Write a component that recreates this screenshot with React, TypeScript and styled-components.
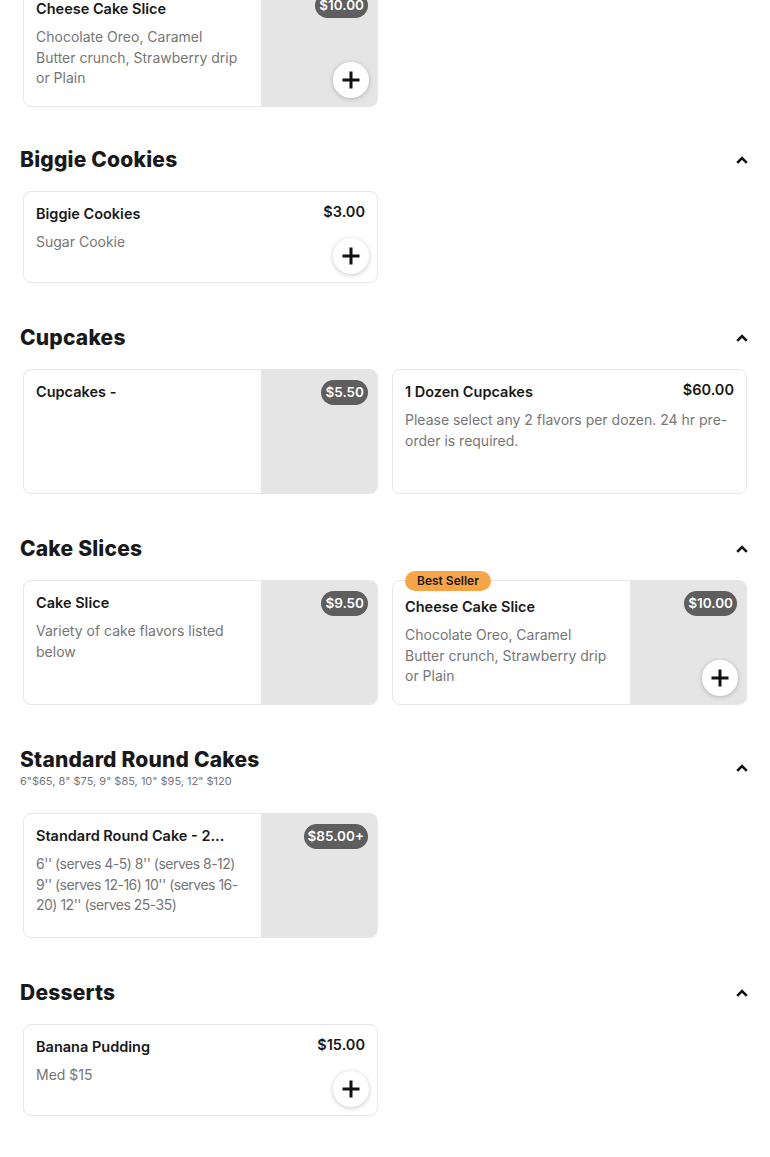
import styled, { createGlobalStyle } from "styled-components";

type Item = {
  name: string;
  price: string;
  desc?: string;
  image?: boolean;
  add?: boolean;
  badge?: string;
  tight?: boolean;
};

type Section = {
  title?: string;
  subtitle?: string;
  items: Item[];
};

const cheeseCake: Item = {
  name: "Cheese Cake Slice",
  price: "$10.00",
  desc: "Chocolate Oreo, Caramel Butter crunch, Strawberry drip or Plain",
  image: true,
  add: true,
  badge: "Best Seller",
};

const sections: Section[] = [
  { items: [cheeseCake] },
  {
    title: "Biggie Cookies",
    items: [{ name: "Biggie Cookies", price: "$3.00", desc: "Sugar Cookie", add: true }],
  },
  {
    title: "Cupcakes",
    items: [
      { name: "Cupcakes -", price: "$5.50", image: true },
      {
        name: "1 Dozen Cupcakes",
        price: "$60.00",
        desc: "Please select any 2 flavors per dozen. 24 hr pre-order is required.",
      },
    ],
  },
  {
    title: "Cake Slices",
    items: [
      { name: "Cake Slice", price: "$9.50", desc: "Variety of cake flavors listed below", image: true },
      cheeseCake,
    ],
  },
  {
    title: "Standard Round Cakes",
    subtitle: "6\"$65, 8\" $75, 9\" $85, 10\" $95, 12\" $120",
    items: [
      {
        name: "Standard Round Cake - 2...",
        price: "$85.00+",
        desc: "6'' (serves 4-5) 8'' (serves 8-12) 9'' (serves 12-16) 10'' (serves 16-20) 12'' (serves 25-35)",
        image: true,
        tight: true,
      },
    ],
  },
  {
    title: "Desserts",
    items: [{ name: "Banana Pudding", price: "$15.00", desc: "Med $15", add: true }],
  },
];

const PlusIcon = () => (
  <svg width="20" height="20" viewBox="0 0 20 20">
    <path d="M10 1.5v17M1.5 10h17" stroke="#111" strokeWidth="3" />
  </svg>
);

const ChevronUp = () => (
  <svg width="12" height="8" viewBox="0 0 12 8">
    <path d="M1.2 6.8L6 2l4.8 4.8" fill="none" stroke="#111" strokeWidth="2.6" />
  </svg>
);

const ItemCard = ({ item }: { item: Item }) => (
  <Card>
    {item.badge && <Badge>{item.badge}</Badge>}
    <Info $badge={!!item.badge}>
      <NameRow>
        <Name>{item.name}</Name>
        {!item.image && <Price>{item.price}</Price>}
      </NameRow>
      {item.desc && (
        <Desc $wide={!item.image} $tight={item.tight}>
          {item.desc}
        </Desc>
      )}
    </Info>
    {item.image && (
      <Photo>
        <PricePill>{item.price}</PricePill>
      </Photo>
    )}
    {item.add && (
      <AddButton aria-label="Add">
        <PlusIcon />
      </AddButton>
    )}
  </Card>
);

export default function App() {
  return (
    <>
      <GlobalStyle />
      <Page>
        {sections.map((s, i) => (
          <Block key={i} $first={i === 0}>
            {s.title && (
              <Header $sub={!!s.subtitle}>
                <div>
                  <Title>{s.title}</Title>
                  {s.subtitle && <Subtitle>{s.subtitle}</Subtitle>}
                </div>
                <Toggle>
                  <ChevronUp />
                </Toggle>
              </Header>
            )}
            <Grid>
              {s.items.map((it, j) => (
                <ItemCard key={j} item={it} />
              ))}
            </Grid>
          </Block>
        ))}
      </Page>
    </>
  );
}

const GlobalStyle = createGlobalStyle`
  body {
    margin: 0;
    background: #ffffff;
    font-family: Inter, "Noto Sans", sans-serif;
    color: #191919;
    overflow: hidden;
  }
`;

const Page = styled.div`
  display: flex;
  flex-direction: column;
  gap: 41px;
  padding: 0 20px 40px;
`;

const Block = styled.section<{ $first?: boolean }>`
  margin: ${(p) => (p.$first ? "-18px 0 -2px" : "0")};
`;

const Header = styled.div<{ $sub?: boolean }>`
  display: flex;
  justify-content: space-between;
  align-items: center;
  margin-bottom: ${(p) => (p.$sub ? "24px" : "18px")};
`;

const Title = styled.h2`
  margin: 0;
  font-size: 21px;
  line-height: 27px;
  font-weight: 800;
  letter-spacing: 0.2px;
`;

const Subtitle = styled.div`
  font-size: 11px;
  line-height: 16px;
  color: #767676;
`;

const Toggle = styled.div`
  display: flex;
  align-items: center;
  justify-content: center;
  width: 16px;
  height: 16px;
`;

const Grid = styled.div`
  display: grid;
  grid-template-columns: 1fr 1fr;
  gap: 14px;
  padding: 0 3px;
`;

const Card = styled.div`
  position: relative;
  display: flex;
  min-height: 90px;
  border: 1px solid #e6e6eb;
  border-radius: 8px;
  background: #ffffff;
`;

const Badge = styled.span`
  position: absolute;
  top: -10px;
  left: 12px;
  height: 20px;
  padding: 0 12px;
  border-radius: 10px;
  background: #f9a447;
  font-size: 12px;
  line-height: 20px;
  font-weight: 600;
  color: #191919;
`;

const Info = styled.div<{ $badge?: boolean }>`
  flex: 1;
  min-width: 0;
  padding: ${(p) => (p.$badge ? "16px" : "12px")} 12px 12px 12px;
`;

const NameRow = styled.div`
  display: flex;
  justify-content: space-between;
  align-items: flex-start;
  gap: 8px;
`;

const Name = styled.div`
  font-size: 14.5px;
  line-height: 20px;
  font-weight: 600;
  white-space: nowrap;
  overflow: hidden;
  text-overflow: ellipsis;
`;

const Price = styled.div`
  font-size: 14.5px;
  line-height: 20px;
  font-weight: 600;
  margin-top: -2px;
`;

const Desc = styled.p<{ $wide?: boolean; $tight?: boolean }>`
  margin: 8px 0 0;
  padding-right: ${(p) => (p.$wide ? "2px" : "8px")};
  font-size: 14px;
  line-height: 20.5px;
  letter-spacing: ${(p) => (p.$tight ? "-0.5px" : "0")};
  color: #767676;
`;

const Photo = styled.div`
  position: relative;
  width: 116px;
  min-height: 123px;
  flex-shrink: 0;
  background: #e5e5e5;
  border-radius: 0 7px 7px 0;
`;

const PricePill = styled.span`
  position: absolute;
  top: 10px;
  right: 9px;
  height: 25px;
  padding: 0 4px;
  border-radius: 13px;
  background: #5e5e5e;
  color: #ffffff;
  font-size: 13.5px;
  line-height: 25px;
  font-weight: 600;
`;

const AddButton = styled.button`
  position: absolute;
  right: 8px;
  bottom: 8px;
  display: flex;
  align-items: center;
  justify-content: center;
  width: 36px;
  height: 36px;
  padding: 0;
  border: none;
  border-radius: 50%;
  background: #ffffff;
  box-shadow: 0 1px 5px rgba(0, 0, 0, 0.22);
  cursor: pointer;
`;
